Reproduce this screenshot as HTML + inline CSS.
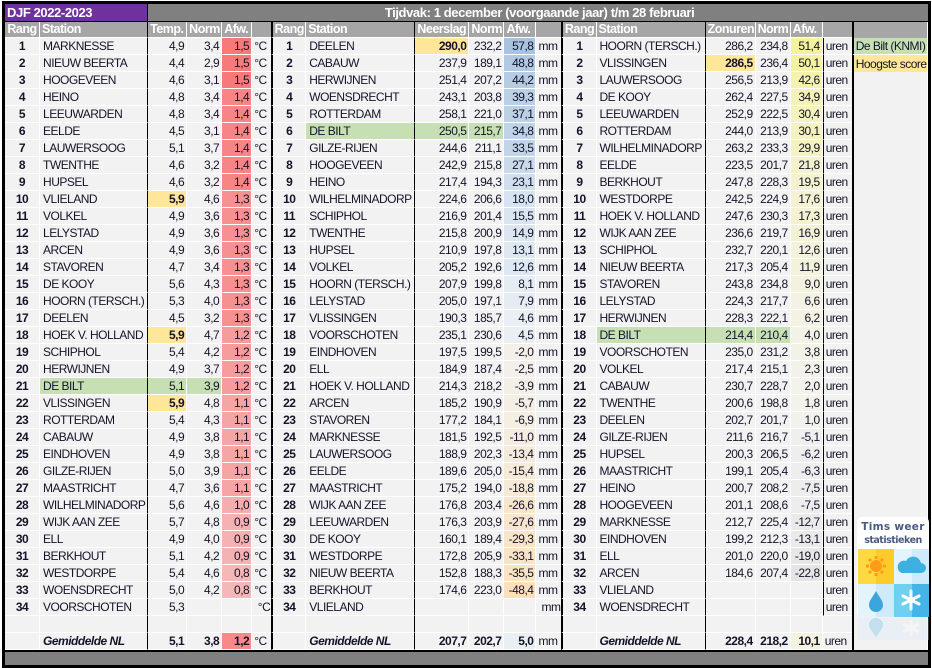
<!DOCTYPE html>
<html><head><meta charset="utf-8"><style>
*{box-sizing:border-box}
body{margin:0;width:932px;height:668px;background:#fff;position:relative;overflow:hidden;font-family:"Liberation Sans",Arial,sans-serif;font-size:12px;letter-spacing:-0.5px;color:#141428}
#frame{position:absolute;left:2px;top:1px;width:929px;height:667px;border:3px solid #000;background:#f2f2f2}
table{position:absolute;left:0;top:0;border-collapse:separate;border-spacing:0;table-layout:fixed;width:923px}
td{padding:0;height:17px;line-height:16px;white-space:nowrap;overflow:hidden;border-right:1px solid #fff;border-bottom:1px solid #fff}
tr.h1 td{height:18px;background:#808080;color:#fff;font-weight:bold;font-size:13px;letter-spacing:-0.4px;border-bottom:1px solid #000;border-right:none}
tr.h1 td.p{background:#7030a0;padding-left:2px;border-right:1px solid #000;text-align:left}
tr.h1 td.t{text-align:center}
tr.h2 td{height:16px;line-height:15px;background:#a6a6a6;color:#fff;font-weight:bold;font-size:12.5px;letter-spacing:-0.5px}
td:nth-child(6n+1){text-align:center;font-weight:bold}
td:nth-child(6n+2){padding-left:3px}
td:nth-child(6n+3),td:nth-child(6n+4),td:nth-child(6n+5){text-align:right;padding-right:2px}
td:nth-child(6n){padding-left:2px;border-right:none}
td:nth-child(6n+2){border-right:1px solid #000}
td:nth-child(7),td:nth-child(13){border-left:2px solid #000}
td:nth-child(19){border-left:2px solid #000;border-bottom:none;text-align:left;font-weight:normal;padding-left:2px}
tr.h2 td:nth-child(6n+1),tr.h2 td:nth-child(6n+2),tr.h2 td:nth-child(6n+3),tr.h2 td:nth-child(6n+4),tr.h2 td:nth-child(6n+5){text-align:left;padding-left:2px;padding-right:0}
tr.h2 td:nth-child(6n+1){text-align:center;padding-left:0}
tr.d td:nth-child(18){border-left:1px solid #000}
.y{background:#ffe699;font-weight:bold}
.g{background:#c6e0b4}
tr.gm td{font-weight:bold}
tr.gm td:nth-child(6n){font-weight:normal}
tr.gm td:nth-child(6n+2){font-style:italic}
#bar{position:absolute;left:0;top:646px;width:923px;height:15px;background:#808080;border-top:2px solid #000}
#logo{position:absolute;left:851px;top:511px;width:73px;height:130px}
</style></head><body><div id="frame">
<table>
<colgroup><col style="width:35px"><col style="width:108px"><col style="width:39px"><col style="width:35px"><col style="width:30px"><col style="width:19px"><col style="width:35px"><col style="width:109px"><col style="width:54px"><col style="width:35px"><col style="width:32px"><col style="width:25px"><col style="width:35px"><col style="width:109px"><col style="width:50px"><col style="width:35px"><col style="width:32px"><col style="width:29px"><col style="width:76px"></colgroup>
<tr class="h1"><td class="p" colspan="2">DJF 2022-2023</td><td class="t" colspan="17">Tijdvak: 1 december (voorgaande jaar) t/m 28 februari</td></tr>
<tr class="h2"><td>Rang</td><td>Station</td><td>Temp.</td><td>Norm</td><td>Afw.</td><td></td><td>Rang</td><td>Station</td><td>Neerslag</td><td>Norm</td><td>Afw.</td><td></td><td>Rang</td><td>Station</td><td>Zonuren</td><td>Norm</td><td>Afw.</td><td></td><td></td></tr>
<tr class="d"><td>1</td><td>MARKNESSE</td><td>4,9</td><td>3,4</td><td style="background:#f8797a">1,5</td><td>°C</td><td>1</td><td>DEELEN</td><td class="y">290,0</td><td>232,2</td><td style="background:#a8c3df">57,8</td><td>mm</td><td>1</td><td>HOORN (TERSCH.)</td><td>286,2</td><td>234,8</td><td style="background:#f4f29c">51,4</td><td>uren</td><td class="g" style="border-bottom:1px solid #fff">De Bilt (KNMI)</td></tr>
<tr class="d"><td>2</td><td>NIEUW BEERTA</td><td>4,4</td><td>2,9</td><td style="background:#f8797a">1,5</td><td>°C</td><td>2</td><td>CABAUW</td><td>237,9</td><td>189,1</td><td style="background:#b1c9e2">48,8</td><td>mm</td><td>2</td><td>VLISSINGEN</td><td class="y">286,5</td><td>236,4</td><td style="background:#f4f29f">50,1</td><td>uren</td><td class="y" style="font-weight:normal">Hoogste score</td></tr>
<tr class="d"><td>3</td><td>HOOGEVEEN</td><td>4,6</td><td>3,1</td><td style="background:#f8797a">1,5</td><td>°C</td><td>3</td><td>HERWIJNEN</td><td>251,4</td><td>207,2</td><td style="background:#b6cce3">44,2</td><td>mm</td><td>3</td><td>LAUWERSOOG</td><td>256,5</td><td>213,9</td><td style="background:#f4f2ac">42,6</td><td>uren</td><td></td></tr>
<tr class="d"><td>4</td><td>HEINO</td><td>4,8</td><td>3,4</td><td style="background:#f88585">1,4</td><td>°C</td><td>4</td><td>WOENSDRECHT</td><td>243,1</td><td>203,8</td><td style="background:#bad0e5">39,3</td><td>mm</td><td>4</td><td>DE KOOY</td><td>262,4</td><td>227,5</td><td style="background:#f4f2b8">34,9</td><td>uren</td><td></td></tr>
<tr class="d"><td>5</td><td>LEEUWARDEN</td><td>4,8</td><td>3,4</td><td style="background:#f88585">1,4</td><td>°C</td><td>5</td><td>ROTTERDAM</td><td>258,1</td><td>221,0</td><td style="background:#bdd1e6">37,1</td><td>mm</td><td>5</td><td>LEEUWARDEN</td><td>252,9</td><td>222,5</td><td style="background:#f4f2bf">30,4</td><td>uren</td><td></td></tr>
<tr class="d"><td>6</td><td>EELDE</td><td>4,5</td><td>3,1</td><td style="background:#f88585">1,4</td><td>°C</td><td>6</td><td class="g">DE BILT</td><td class="g">250,5</td><td class="g">215,7</td><td style="background:#c0d3e7">34,8</td><td>mm</td><td>6</td><td>ROTTERDAM</td><td>244,0</td><td>213,9</td><td style="background:#f4f2bf">30,1</td><td>uren</td><td></td></tr>
<tr class="d"><td>7</td><td>LAUWERSOOG</td><td>5,1</td><td>3,7</td><td style="background:#f88585">1,4</td><td>°C</td><td>7</td><td>GILZE-RIJEN</td><td>244,6</td><td>211,1</td><td style="background:#c2d5e8">33,5</td><td>mm</td><td>7</td><td>WILHELMINADORP</td><td>263,2</td><td>233,3</td><td style="background:#f4f2c0">29,9</td><td>uren</td><td></td></tr>
<tr class="d"><td>8</td><td>TWENTHE</td><td>4,6</td><td>3,2</td><td style="background:#f88585">1,4</td><td>°C</td><td>8</td><td>HOOGEVEEN</td><td>242,9</td><td>215,8</td><td style="background:#c9dbeb">27,1</td><td>mm</td><td>8</td><td>EELDE</td><td>223,5</td><td>201,7</td><td style="background:#f4f2cc">21,8</td><td>uren</td><td></td></tr>
<tr class="d"><td>9</td><td>HUPSEL</td><td>4,6</td><td>3,2</td><td style="background:#f88585">1,4</td><td>°C</td><td>9</td><td>HEINO</td><td>217,4</td><td>194,3</td><td style="background:#cfdfed">23,1</td><td>mm</td><td>9</td><td>BERKHOUT</td><td>247,8</td><td>228,3</td><td style="background:#f4f2d0">19,5</td><td>uren</td><td></td></tr>
<tr class="d"><td>10</td><td>VLIELAND</td><td class="y">5,9</td><td>4,6</td><td style="background:#f79090">1,3</td><td>°C</td><td>10</td><td>WILHELMINADORP</td><td>224,6</td><td>206,6</td><td style="background:#d6e3f0">18,0</td><td>mm</td><td>10</td><td>WESTDORPE</td><td>242,5</td><td>224,9</td><td style="background:#f4f2d3">17,6</td><td>uren</td><td></td></tr>
<tr class="d"><td>11</td><td>VOLKEL</td><td>4,9</td><td>3,6</td><td style="background:#f79090">1,3</td><td>°C</td><td>11</td><td>SCHIPHOL</td><td>216,9</td><td>201,4</td><td style="background:#d9e5f0">15,5</td><td>mm</td><td>11</td><td>HOEK V. HOLLAND</td><td>247,6</td><td>230,3</td><td style="background:#f4f2d3">17,3</td><td>uren</td><td></td></tr>
<tr class="d"><td>12</td><td>LELYSTAD</td><td>4,9</td><td>3,6</td><td style="background:#f79090">1,3</td><td>°C</td><td>12</td><td>TWENTHE</td><td>215,8</td><td>200,9</td><td style="background:#dbe6f1">14,9</td><td>mm</td><td>12</td><td>WIJK AAN ZEE</td><td>236,6</td><td>219,7</td><td style="background:#f4f2d4">16,9</td><td>uren</td><td></td></tr>
<tr class="d"><td>13</td><td>ARCEN</td><td>4,9</td><td>3,6</td><td style="background:#f79090">1,3</td><td>°C</td><td>13</td><td>HUPSEL</td><td>210,9</td><td>197,8</td><td style="background:#dde8f1">13,1</td><td>mm</td><td>13</td><td>SCHIPHOL</td><td>232,7</td><td>220,1</td><td style="background:#f3f2da">12,6</td><td>uren</td><td></td></tr>
<tr class="d"><td>14</td><td>STAVOREN</td><td>4,7</td><td>3,4</td><td style="background:#f79090">1,3</td><td>°C</td><td>14</td><td>VOLKEL</td><td>205,2</td><td>192,6</td><td style="background:#dee8f2">12,6</td><td>mm</td><td>14</td><td>NIEUW BEERTA</td><td>217,3</td><td>205,4</td><td style="background:#f3f2db">11,9</td><td>uren</td><td></td></tr>
<tr class="d"><td>15</td><td>DE KOOY</td><td>5,6</td><td>4,3</td><td style="background:#f79090">1,3</td><td>°C</td><td>15</td><td>HOORN (TERSCH.)</td><td>207,9</td><td>199,8</td><td style="background:#e5ecf3">8,1</td><td>mm</td><td>15</td><td>STAVOREN</td><td>243,8</td><td>234,8</td><td style="background:#f3f2df">9,0</td><td>uren</td><td></td></tr>
<tr class="d"><td>16</td><td>HOORN (TERSCH.)</td><td>5,3</td><td>4,0</td><td style="background:#f79090">1,3</td><td>°C</td><td>16</td><td>LELYSTAD</td><td>205,0</td><td>197,1</td><td style="background:#e5ecf3">7,9</td><td>mm</td><td>16</td><td>LELYSTAD</td><td>224,3</td><td>217,7</td><td style="background:#f3f2e3">6,6</td><td>uren</td><td></td></tr>
<tr class="d"><td>17</td><td>DEELEN</td><td>4,5</td><td>3,2</td><td style="background:#f79090">1,3</td><td>°C</td><td>17</td><td>VLISSINGEN</td><td>190,3</td><td>185,7</td><td style="background:#eaeff3">4,6</td><td>mm</td><td>17</td><td>HERWIJNEN</td><td>228,3</td><td>222,1</td><td style="background:#f3f2e3">6,2</td><td>uren</td><td></td></tr>
<tr class="d"><td>18</td><td>HOEK V. HOLLAND</td><td class="y">5,9</td><td>4,7</td><td style="background:#f69c9c">1,2</td><td>°C</td><td>18</td><td>VOORSCHOTEN</td><td>235,1</td><td>230,6</td><td style="background:#eaeff3">4,5</td><td>mm</td><td>18</td><td class="g">DE BILT</td><td class="g">214,4</td><td class="g">210,4</td><td style="background:#f3f2e7">4,0</td><td>uren</td><td></td></tr>
<tr class="d"><td>19</td><td>SCHIPHOL</td><td>5,4</td><td>4,2</td><td style="background:#f69c9c">1,2</td><td>°C</td><td>19</td><td>EINDHOVEN</td><td>197,5</td><td>199,5</td><td style="background:#f3f0ea">-2,0</td><td>mm</td><td>19</td><td>VOORSCHOTEN</td><td>235,0</td><td>231,2</td><td style="background:#f3f2e7">3,8</td><td>uren</td><td></td></tr>
<tr class="d"><td>20</td><td>HERWIJNEN</td><td>4,9</td><td>3,7</td><td style="background:#f69c9c">1,2</td><td>°C</td><td>20</td><td>ELL</td><td>184,9</td><td>187,4</td><td style="background:#f3f0e9">-2,5</td><td>mm</td><td>20</td><td>VOLKEL</td><td>217,4</td><td>215,1</td><td style="background:#f3f2ea">2,3</td><td>uren</td><td></td></tr>
<tr class="d"><td>21</td><td class="g">DE BILT</td><td class="g">5,1</td><td class="g">3,9</td><td style="background:#f69c9c">1,2</td><td>°C</td><td>21</td><td>HOEK V. HOLLAND</td><td>214,3</td><td>218,2</td><td style="background:#f3efe7">-3,9</td><td>mm</td><td>21</td><td>CABAUW</td><td>230,7</td><td>228,7</td><td style="background:#f3f2eb">2,0</td><td>uren</td><td></td></tr>
<tr class="d"><td>22</td><td>VLISSINGEN</td><td class="y">5,9</td><td>4,8</td><td style="background:#f6a5a5">1,1</td><td>°C</td><td>22</td><td>ARCEN</td><td>185,2</td><td>190,9</td><td style="background:#f4eee4">-5,7</td><td>mm</td><td>22</td><td>TWENTHE</td><td>200,6</td><td>198,8</td><td style="background:#f3f2eb">1,8</td><td>uren</td><td></td></tr>
<tr class="d"><td>23</td><td>ROTTERDAM</td><td>5,4</td><td>4,3</td><td style="background:#f6a5a5">1,1</td><td>°C</td><td>23</td><td>STAVOREN</td><td>177,2</td><td>184,1</td><td style="background:#f4eee3">-6,9</td><td>mm</td><td>23</td><td>DEELEN</td><td>202,7</td><td>201,7</td><td style="background:#f2f2ed">1,0</td><td>uren</td><td></td></tr>
<tr class="d"><td>24</td><td>CABAUW</td><td>4,9</td><td>3,8</td><td style="background:#f6a5a5">1,1</td><td>°C</td><td>24</td><td>MARKNESSE</td><td>181,5</td><td>192,5</td><td style="background:#f5ecdf">-11,0</td><td>mm</td><td>24</td><td>GILZE-RIJEN</td><td>211,6</td><td>216,7</td><td style="background:#efefef">-5,1</td><td>uren</td><td></td></tr>
<tr class="d"><td>25</td><td>EINDHOVEN</td><td>4,9</td><td>3,8</td><td style="background:#f6a5a5">1,1</td><td>°C</td><td>25</td><td>LAUWERSOOG</td><td>188,9</td><td>202,3</td><td style="background:#f5ebdc">-13,4</td><td>mm</td><td>25</td><td>HUPSEL</td><td>200,3</td><td>206,5</td><td style="background:#eeeeee">-6,2</td><td>uren</td><td></td></tr>
<tr class="d"><td>26</td><td>GILZE-RIJEN</td><td>5,0</td><td>3,9</td><td style="background:#f6a5a5">1,1</td><td>°C</td><td>26</td><td>EELDE</td><td>189,6</td><td>205,0</td><td style="background:#f6ead9">-15,4</td><td>mm</td><td>26</td><td>MAASTRICHT</td><td>199,1</td><td>205,4</td><td style="background:#eeeeee">-6,3</td><td>uren</td><td></td></tr>
<tr class="d"><td>27</td><td>MAASTRICHT</td><td>4,7</td><td>3,6</td><td style="background:#f6a5a5">1,1</td><td>°C</td><td>27</td><td>MAASTRICHT</td><td>175,2</td><td>194,0</td><td style="background:#f6e9d5">-18,8</td><td>mm</td><td>27</td><td>HEINO</td><td>200,7</td><td>208,2</td><td style="background:#ededed">-7,5</td><td>uren</td><td></td></tr>
<tr class="d"><td>28</td><td>WILHELMINADORP</td><td>5,6</td><td>4,6</td><td style="background:#f5adad">1,0</td><td>°C</td><td>28</td><td>WIJK AAN ZEE</td><td>176,8</td><td>203,4</td><td style="background:#f8e6cc">-26,6</td><td>mm</td><td>28</td><td>HOOGEVEEN</td><td>201,1</td><td>208,6</td><td style="background:#ededed">-7,5</td><td>uren</td><td></td></tr>
<tr class="d"><td>29</td><td>WIJK AAN ZEE</td><td>5,7</td><td>4,8</td><td style="background:#f5b2b2">0,9</td><td>°C</td><td>29</td><td>LEEUWARDEN</td><td>176,3</td><td>203,9</td><td style="background:#f8e5cb">-27,6</td><td>mm</td><td>29</td><td>MARKNESSE</td><td>212,7</td><td>225,4</td><td style="background:#eaeaea">-12,7</td><td>uren</td><td></td></tr>
<tr class="d"><td>30</td><td>ELL</td><td>4,9</td><td>4,0</td><td style="background:#f5b2b2">0,9</td><td>°C</td><td>30</td><td>DE KOOY</td><td>160,1</td><td>189,4</td><td style="background:#f8e5c9">-29,3</td><td>mm</td><td>30</td><td>EINDHOVEN</td><td>199,2</td><td>212,3</td><td style="background:#eaeaea">-13,1</td><td>uren</td><td></td></tr>
<tr class="d"><td>31</td><td>BERKHOUT</td><td>5,1</td><td>4,2</td><td style="background:#f5b2b2">0,9</td><td>°C</td><td>31</td><td>WESTDORPE</td><td>172,8</td><td>205,9</td><td style="background:#f9e4c6">-33,1</td><td>mm</td><td>31</td><td>ELL</td><td>201,0</td><td>220,0</td><td style="background:#e7e7e7">-19,0</td><td>uren</td><td></td></tr>
<tr class="d"><td>32</td><td>WESTDORPE</td><td>5,4</td><td>4,6</td><td style="background:#f5b8b8">0,8</td><td>°C</td><td>32</td><td>NIEUW BEERTA</td><td>152,8</td><td>188,3</td><td style="background:#f9e3c4">-35,5</td><td>mm</td><td>32</td><td>ARCEN</td><td>184,6</td><td>207,4</td><td style="background:#e4e4e4">-22,8</td><td>uren</td><td></td></tr>
<tr class="d"><td>33</td><td>WOENSDRECHT</td><td>5,0</td><td>4,2</td><td style="background:#f5b8b8">0,8</td><td>°C</td><td>33</td><td>BERKHOUT</td><td>174,6</td><td>223,0</td><td style="background:#fbe0bb">-48,4</td><td>mm</td><td>33</td><td>VLIELAND</td><td></td><td></td><td></td><td>uren</td><td></td></tr>
<tr class="d"><td>34</td><td>VOORSCHOTEN</td><td>5,3</td><td></td><td></td><td style="text-align:right;padding-right:1px">°C</td><td>34</td><td>VLIELAND</td><td></td><td></td><td></td><td style="text-align:right;padding-right:1px">mm</td><td>34</td><td>WOENSDRECHT</td><td></td><td></td><td></td><td>uren</td><td></td></tr>
<tr><td></td><td></td><td></td><td></td><td></td><td></td><td></td><td></td><td></td><td></td><td></td><td></td><td></td><td></td><td></td><td></td><td></td><td></td><td></td></tr>
<tr class="gm"><td></td><td>Gemiddelde NL</td><td>5,1</td><td>3,8</td><td style="background:#f8898a">1,2</td><td>°C</td><td></td><td>Gemiddelde NL</td><td>207,7</td><td>202,7</td><td style="background:#eaeff3">5,0</td><td>mm</td><td></td><td>Gemiddelde NL</td><td>228,4</td><td>218,2</td><td style="background:#f3f2df">10,1</td><td>uren</td><td></td></tr>
</table>
<div id="bar"></div>
<svg id="logo" width="73" height="130" viewBox="0 0 73 130">
<rect x="1" y="2" width="72" height="100" rx="5" fill="#fff"/>
<text x="37" y="15" text-anchor="middle" font-family="DejaVu Sans, sans-serif" font-size="10.5" font-weight="bold" fill="#4a5a80" letter-spacing="0.3">Tims weer</text>
<text x="37" y="28" text-anchor="middle" font-family="DejaVu Sans, sans-serif" font-size="9.5" font-weight="bold" fill="#4a5a80">statistieken</text>
<rect x="2" y="34" width="36" height="35" fill="#ffd940"/>
<rect x="20" y="34" width="18" height="35" fill="#ffcb2a"/>
<rect x="38" y="34" width="35" height="35" fill="#e4f4fd"/>
<rect x="56" y="34" width="17" height="35" fill="#cfeafb"/>
<rect x="2" y="69" width="36" height="33" fill="#e4f4fd"/>
<rect x="20" y="69" width="18" height="33" fill="#cfeafb"/>
<rect x="38" y="69" width="35" height="33" fill="#6fd0f0"/>
<rect x="56" y="69" width="17" height="33" fill="#45b4e6"/>
<circle cx="20" cy="51" r="6" fill="#ff9a1a"/>
<g stroke="#ff9a1a" stroke-width="3"><path d="M20 41v3M20 58v3M10 51h3M27 51h3M13 44l2 2M25 56l2 2M13 58l2-2M25 46l2-2"/></g>
<path d="M46 58h19a5 5 0 0 0 0-10 8 8 0 0 0-15-2 6 6 0 0 0-4 12z" fill="#3cb0e0"/>
<path d="M20 76c-4 7-7 10-7 14a7 7 0 0 0 14 0c0-4-3-7-7-14z" fill="#3aa6dc"/>
<g stroke="#fff" stroke-width="3" stroke-linecap="round"><path d="M55 76v18M47 81l16 8M47 89l16-8"/></g>
<g opacity="0.25"><rect x="2" y="103" width="71" height="22" fill="#cfeafb"/><path d="M20 122c-4-6-7-9-7-12a7 7 0 0 1 14 0c0 3-3 6-7 12z" fill="#3aa6dc"/><path d="M55 105v16M47 109l16 8M47 117l16-8" stroke="#fff" stroke-width="3"/></g>
</svg>
</div></body></html>
